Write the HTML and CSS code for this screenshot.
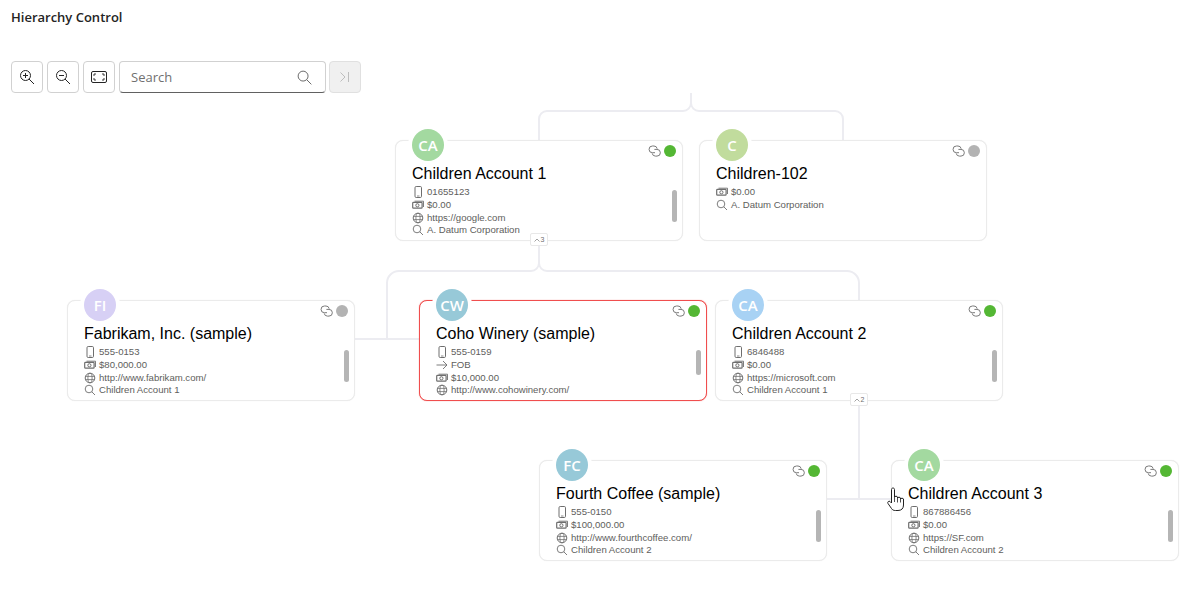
FILE: index.html
```html
<!DOCTYPE html>
<html lang="en">
<head>
<meta charset="utf-8">
<title>Hierarchy Control</title>
<link rel="stylesheet" href="styles.css">
</head>
<body>
<svg class="defs" width="0" height="0" aria-hidden="true">
  <symbol id="i-phone" viewBox="0 0 12 12"><rect x="3" y="0.5" width="6.500" height="11" rx="1.200" fill="none" stroke="currentColor"/><path d="M5 10h2.500" stroke="currentColor" stroke-width=".8"/></symbol>
  <symbol id="i-money" viewBox="0 0 12 12"><path d="M2.500 2.200h9v5.800" fill="none" stroke="currentColor" stroke-width=".9"/><rect x=".7" y="3.400" width="9.400" height="5.800" rx=".8" fill="none" stroke="currentColor" stroke-width="1.200"/><circle cx="5.400" cy="6.300" r="1.600" fill="none" stroke="currentColor"/></symbol>
  <symbol id="i-globe" viewBox="0 0 12 12"><circle cx="6" cy="6" r="4.800" fill="none" stroke="currentColor"/><ellipse cx="6" cy="6" rx="2.100" ry="4.800" fill="none" stroke="currentColor" stroke-width=".8"/><path d="M1.300 4.400h9.400M1.300 7.600h9.400" stroke="currentColor" stroke-width=".8"/></symbol>
  <symbol id="i-search" viewBox="0 0 12 12"><circle cx="5" cy="5" r="3.800" fill="none" stroke="currentColor" stroke-width=".9"/><path d="M7.800 7.800l3.200 3.200" stroke="currentColor" stroke-width=".9"/></symbol>
  <symbol id="i-arrow" viewBox="0 0 12 12"><path d="M.5 6h10.500M7 2l4 4-4 4" fill="none" stroke="currentColor" stroke-width=".9"/></symbol>
  <symbol id="i-link" viewBox="0 0 13 12"><path d="M7 7.700H4.400a3.300 3.300 0 0 1 0-6.700H6a3.300 3.300 0 0 1 3.200 2.700" fill="none" stroke="currentColor"/><path d="M6.400 4.400H9a3.300 3.300 0 0 1 0 6.700H7.400a3.300 3.300 0 0 1-3.200-2.700" fill="none" stroke="currentColor"/></symbol>
</svg>

<h1 class="page-title">Hierarchy Control</h1>

<div class="toolbar">
  <button class="tool" type="button" aria-label="Zoom in"><svg class="tool-icon" viewBox="0 0 16 16"><circle cx="6.500" cy="6.500" r="5" fill="none" stroke="currentColor"/><path d="M10 10l5 5M4 6.500h5M6.500 4v5" stroke="currentColor" fill="none"/></svg></button>
  <button class="tool" type="button" aria-label="Zoom out"><svg class="tool-icon" viewBox="0 0 16 16"><circle cx="6.500" cy="6.500" r="5" fill="none" stroke="currentColor"/><path d="M10 10l5 5M4 6.500h5" stroke="currentColor" fill="none"/></svg></button>
  <button class="tool" type="button" aria-label="Fit"><svg class="tool-icon fit" viewBox="0 0 16 12"><rect x=".5" y=".5" width="15" height="11" rx="1.500" fill="none" stroke="currentColor"/><path d="M3 5V3h2M11 3h2v2M13 7v2h-2M5 9H3V7" fill="none" stroke="currentColor" stroke-width=".9"/></svg></button>
  <div class="search">
    <span class="search-text">Search</span>
    <svg class="search-icon" viewBox="0 0 16 16"><circle cx="6.500" cy="6.500" r="5.300" fill="none" stroke="currentColor"/><path d="M10.300 10.300l5 5" stroke="currentColor" fill="none"/></svg>
  </div>
  <button class="tool tool-disabled" type="button" aria-label="Next" disabled><svg class="next-icon" viewBox="0 0 10 10"><path d="M.5 .5L5 5 .5 9.500M8.500 0v10" fill="none" stroke="currentColor"/></svg></button>
</div>

<main class="canvas">
  <svg class="wires" viewBox="0 93 1194 498" width="1194" height="498" aria-hidden="true">
    <path d="M691 93v10a8 8 0 0 1-8 8H547a8 8 0 0 0-8 8v21M691 103a8 8 0 0 0 8 8H835a8 8 0 0 1 8 8v21"/>
    <path d="M539 246v17a8 8 0 0 1-8 8H399a12 12 0 0 0-12 12v56M539 263a8 8 0 0 0 8 8H847a12 12 0 0 1 12 12v17M355 339h64"/>
    <path d="M859 405v94M827 499h64"/>
  </svg>

  <article class="node n1">
    <span class="avatar green">CA</span>
    <div class="status"><svg class="link"><use href="#i-link"/></svg><span class="dot on"></span></div>
    <h2 class="name">Children Account 1</h2>
    <ul class="rows">
      <li><svg class="ic"><use href="#i-phone"/></svg>01655123</li>
      <li><svg class="ic"><use href="#i-money"/></svg>$0.00</li>
      <li><svg class="ic"><use href="#i-globe"/></svg>https://google.com</li>
      <li><svg class="ic"><use href="#i-search"/></svg>A. Datum Corporation</li>
    </ul>
    <span class="thumb"></span>
    <span class="badge"><svg class="chev" viewBox="0 0 6 4"><path d="M.5 3.500L3 1l2.500 2.500"/></svg>3</span>
  </article>

  <article class="node n2">
    <span class="avatar lime">C</span>
    <div class="status"><svg class="link"><use href="#i-link"/></svg><span class="dot off"></span></div>
    <h2 class="name">Children-102</h2>
    <ul class="rows">
      <li><svg class="ic"><use href="#i-money"/></svg>$0.00</li>
      <li><svg class="ic"><use href="#i-search"/></svg>A. Datum Corporation</li>
    </ul>
  </article>

  <article class="node n3">
    <span class="avatar lilac">FI</span>
    <div class="status"><svg class="link"><use href="#i-link"/></svg><span class="dot off"></span></div>
    <h2 class="name">Fabrikam, Inc. (sample)</h2>
    <ul class="rows">
      <li><svg class="ic"><use href="#i-phone"/></svg>555-0153</li>
      <li><svg class="ic"><use href="#i-money"/></svg>$80,000.00</li>
      <li><svg class="ic"><use href="#i-globe"/></svg>http://www.fabrikam.com/</li>
      <li><svg class="ic"><use href="#i-search"/></svg>Children Account 1</li>
    </ul>
    <span class="thumb"></span>
  </article>

  <article class="node n4 selected">
    <span class="avatar teal">CW</span>
    <div class="status"><svg class="link"><use href="#i-link"/></svg><span class="dot on"></span></div>
    <h2 class="name">Coho Winery (sample)</h2>
    <ul class="rows">
      <li><svg class="ic"><use href="#i-phone"/></svg>555-0159</li>
      <li><svg class="ic"><use href="#i-arrow"/></svg>FOB</li>
      <li><svg class="ic"><use href="#i-money"/></svg>$10,000.00</li>
      <li><svg class="ic"><use href="#i-globe"/></svg>http://www.cohowinery.com/</li>
    </ul>
    <span class="thumb short"></span>
  </article>

  <article class="node n5">
    <span class="avatar sky">CA</span>
    <div class="status"><svg class="link"><use href="#i-link"/></svg><span class="dot on"></span></div>
    <h2 class="name">Children Account 2</h2>
    <ul class="rows">
      <li><svg class="ic"><use href="#i-phone"/></svg>6846488</li>
      <li><svg class="ic"><use href="#i-money"/></svg>$0.00</li>
      <li><svg class="ic"><use href="#i-globe"/></svg>https://microsoft.com</li>
      <li><svg class="ic"><use href="#i-search"/></svg>Children Account 1</li>
    </ul>
    <span class="thumb"></span>
    <span class="badge"><svg class="chev" viewBox="0 0 6 4"><path d="M.5 3.500L3 1l2.500 2.500"/></svg>2</span>
  </article>

  <article class="node n6">
    <span class="avatar teal">FC</span>
    <div class="status"><svg class="link"><use href="#i-link"/></svg><span class="dot on"></span></div>
    <h2 class="name">Fourth Coffee (sample)</h2>
    <ul class="rows">
      <li><svg class="ic"><use href="#i-phone"/></svg>555-0150</li>
      <li><svg class="ic"><use href="#i-money"/></svg>$100,000.00</li>
      <li><svg class="ic"><use href="#i-globe"/></svg>http://www.fourthcoffee.com/</li>
      <li><svg class="ic"><use href="#i-search"/></svg>Children Account 2</li>
    </ul>
    <span class="thumb"></span>
  </article>

  <article class="node n7">
    <span class="avatar green">CA</span>
    <div class="status"><svg class="link"><use href="#i-link"/></svg><span class="dot on"></span></div>
    <h2 class="name">Children Account 3</h2>
    <ul class="rows">
      <li><svg class="ic"><use href="#i-phone"/></svg>867886456</li>
      <li><svg class="ic"><use href="#i-money"/></svg>$0.00</li>
      <li><svg class="ic"><use href="#i-globe"/></svg>https://SF.com</li>
      <li><svg class="ic"><use href="#i-search"/></svg>Children Account 2</li>
    </ul>
    <span class="thumb"></span>
  </article>

  <svg class="cursor" viewBox="0 0 18 24" aria-hidden="true"><path d="M4.500 16V2.500C4.500 1.500 5.200 1 6 1S7.500 1.500 7.500 2.500V10C7.500 9 10.500 9 10.500 10V11C10.500 10 13.500 10 13.500 11V12C13.500 11 16.500 11 16.500 12V18C16.500 21.500 14.500 23.500 11 23.500H8.500C6.500 23.500 5.500 23 4.500 21.500L1 16.500C0 15 2 13.500 3 14.500Z" fill="#fff" stroke="#222"/><path d="M7.500 10v5M10.500 11v4.500M13.500 12v3.500" stroke="#222" stroke-width=".8" fill="none"/></svg>
</main>
</body>
</html>
```

FILE: styles.css
```css
* { box-sizing: border-box; }

html, body {
  margin: 0;
  padding: 0;
  height: 591px;
  overflow: hidden;
  background: #fff;
}

body {
  font-family: "Liberation Sans", Arial, sans-serif;
  position: relative;
}

.defs { position: absolute; }

.page-title {
  margin: 0;
  padding: 8px 0 0 11px;
  height: 61px;
  font-family: "Open Sans", "Noto Sans", sans-serif;
  font-size: 13px;
  line-height: 18px;
  font-weight: 600;
  color: #242424;
}

.toolbar {
  display: flex;
  gap: 4px;
  height: 32px;
  padding-left: 11px;
}

.tool {
  width: 32px;
  height: 32px;
  padding: 0;
  display: flex;
  align-items: center;
  justify-content: center;
  background: #fff;
  border: 1px solid #d1d1d1;
  border-radius: 4px;
  color: #242424;
}

.tool-icon { width: 16px; height: 16px; }
.tool-icon.fit { width: 16px; height: 12px; }

.tool-disabled {
  margin-left: -1px;
  background: #f0f0f0;
  border-color: #e0e0e0;
  color: #bdbdbd;
}

.next-icon { width: 10px; height: 10px; }

.search {
  width: 207px;
  height: 32px;
  display: flex;
  align-items: center;
  justify-content: space-between;
  padding: 0 13px 0 11px;
  border: 1px solid #d1d1d1;
  border-bottom-color: #616161;
  border-radius: 4px;
}

.search-text {
  font-family: "Open Sans", "Noto Sans", sans-serif;
  font-size: 13px;
  color: #707070;
}

.search-icon { width: 15px; height: 15px; color: #616161; }

.canvas {
  position: relative;
  height: 498px;
}

.wires {
  position: absolute;
  left: 0;
  top: 0;
}

.wires path {
  fill: none;
  stroke: #ececf1;
  stroke-width: 2;
}

.node {
  position: absolute;
  width: 288px;
  height: 101px;
  padding: 21px 0 0 16px;
  background: #fff;
  border: 1px solid #ebebeb;
  border-radius: 8px;
  box-shadow: 0 0 1px #e8e8e8;
}

.n1 { left: 395px; top: 47px; }
.n2 { left: 699px; top: 47px; }
.n3 { left: 67px; top: 207px; }
.n4 { left: 419px; top: 207px; }
.n5 { left: 715px; top: 207px; }
.n6 { left: 539px; top: 367px; }
.n7 { left: 891px; top: 367px; }

.selected {
  border-color: #f04e4e;
  box-shadow: 0 0 1px #f46a6a;
}

.avatar {
  position: absolute;
  left: 16px;
  top: -12px;
  width: 32px;
  height: 32px;
  border-radius: 50%;
  box-shadow: 0 0 0 4px #fff;
  display: flex;
  align-items: center;
  justify-content: center;
  font-family: "Open Sans", "Noto Sans", sans-serif;
  font-size: 15px;
  font-weight: 600;
  color: #fff;
}

.green { background: #a3d9a0; }
.lime { background: #c1dc9d; }
.lilac { background: #d7d0f5; }
.teal { background: #97c9d8; }
.sky { background: #a8d2f4; }

.status {
  position: absolute;
  right: 6px;
  top: 4px;
  display: flex;
  align-items: center;
  gap: 3px;
}

.link { width: 13px; height: 12px; color: #7a7a7a; }

.dot {
  width: 12px;
  height: 12px;
  border-radius: 50%;
}

.on { background: #54b734; }
.off { background: #b3b3b3; }

.name {
  margin: 0;
  font-size: 16px;
  line-height: 23px;
  font-weight: 400;
  color: #000;
}

.rows {
  margin: 0;
  padding: 0;
  list-style: none;
}

.rows li {
  display: flex;
  align-items: center;
  height: 13px;
  font-size: 9.6px;
  line-height: 13px;
  color: #605e5c;
  white-space: nowrap;
}

.rows li:nth-child(4) { margin-top: -1px; }

.ic {
  flex: none;
  width: 12px;
  height: 12px;
  margin-right: 3px;
  color: #6e6e6e;
}

.thumb {
  position: absolute;
  right: 5px;
  top: 49px;
  width: 5px;
  height: 32px;
  border-radius: 3px;
  background: #b5b5b5;
}

.thumb.short { height: 25px; }

.badge {
  position: absolute;
  left: 134px;
  top: 92px;
  width: 18px;
  height: 13px;
  display: flex;
  align-items: center;
  justify-content: center;
  gap: 1px;
  background: #fff;
  border: 1px solid #e8e8e8;
  border-radius: 2px;
  font-size: 7px;
  color: #6e6e6e;
}

.chev { width: 6px; height: 4px; }
.chev path { fill: none; stroke: #8a8a8a; stroke-width: .8; }

.cursor {
  position: absolute;
  left: 887px;
  top: 394px;
  width: 18px;
  height: 24px;
}
```
